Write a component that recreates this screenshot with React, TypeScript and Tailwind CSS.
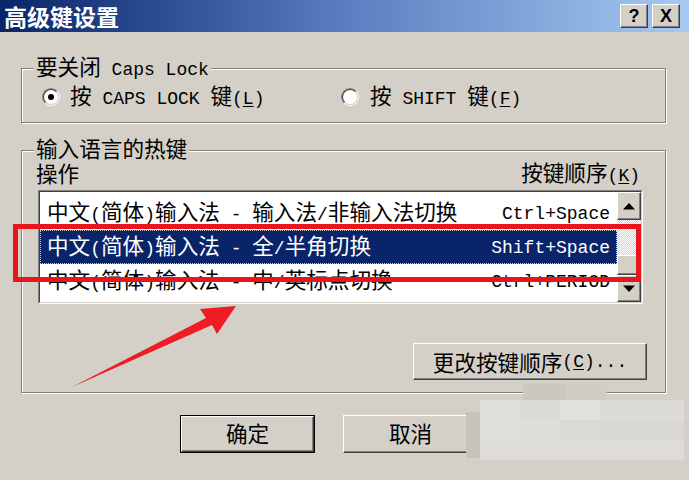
import React from 'react';

const cjk = "font-['Noto_Sans_CJK_SC',sans-serif] text-[21.6px]";
const lat = "font-['Liberation_Mono',monospace] text-[18px]";
const raised =
  'bg-[#d4d0c8] border border-t-white border-l-white border-b-[#404040] border-r-[#404040] shadow-[inset_-1px_-1px_0_#808080]';
const etched = 'border border-[#808080] shadow-[inset_1px_1px_0_#fff,1px_1px_0_#fff]';

const Mix = ({ s }: { s: string }) => (
  <>
    {(s.match(/[\u3000-\u9fff]+|[^\u3000-\u9fff]+/g) || []).map((p, i) =>
      /[\u3000-\u9fff]/.test(p[0]) ? (
        <span key={i} className={cjk}>
          {p}
        </span>
      ) : (
        <span key={i} className={lat}>
          {p}
        </span>
      )
    )}
  </>
);

const U = ({ c }: { c: string }) => <span className={`${lat} underline underline-offset-2`}>{c}</span>;

const Radio = ({ on }: { on?: boolean }) => (
  <span className="w-[18px] h-[18px] shrink-0 rounded-full border border-t-[#808080] border-l-[#808080] border-b-white border-r-white flex">
    <span className="flex-1 rounded-full border border-t-[#404040] border-l-[#404040] border-b-[#d4d0c8] border-r-[#d4d0c8] bg-white flex items-center justify-center">
      {on && <span className="w-[6px] h-[6px] rounded-full bg-black" />}
    </span>
  </span>
);

const rows = [
  { l: '中文(简体)输入法 - 输入法/非输入法切换', r: 'Ctrl+Space' },
  { l: '中文(简体)输入法 - 全/半角切换', r: 'Shift+Space', sel: true },
  { l: '中文(简体)输入法 - 中/英标点切换', r: 'Ctrl+PERIOD' },
];

// mosaic watermark blocks
const mosaic: [number, number, number, number, string][] = [
  [523, 383, 42, 17, '#cbc8c2'],
  [565, 383, 42, 17, '#d0cdc7'],
  [466, 412, 14, 46, '#c6c3bd'],
  [480, 400, 40, 40, '#e1dfdb'],
  [520, 400, 40, 20, '#dcdad5'],
  [560, 400, 40, 20, '#e2e0dc'],
  [600, 400, 84, 20, '#dddbd6'],
  [520, 420, 40, 20, '#dfddd9'],
  [560, 420, 40, 20, '#dbd9d4'],
  [600, 420, 84, 20, '#d9d7d2'],
  [480, 440, 204, 20, '#dedcd8'],
];

export default function App() {
  return (
    <div className="relative w-[689px] h-[480px] overflow-hidden bg-[#d4d0c8] text-black">
      {/* title bar */}
      <div className="h-[32px] flex items-center justify-between pl-[4px] pr-[9px] bg-linear-to-r from-[#0a246a] via-[#5a7ec0] to-[#a6caf0]">
        <span className="font-['Noto_Sans_CJK_SC',sans-serif] text-[23px] font-bold text-white leading-[28px]">高级键设置</span>
        <div className="flex gap-[4px]">
          {['?', 'X'].map((c) => (
            <div key={c} className={`${raised} w-[28px] h-[24px] flex items-center justify-center font-['Liberation_Sans',sans-serif] font-bold text-[18px] leading-none`}>
              {c}
            </div>
          ))}
        </div>
      </div>

      <div className="pl-[21px] pr-[23px]">
        {/* group 1 */}
        <div className={`relative mt-[36px] ${etched} pt-[17px] pb-[14px] pl-[20px]`}>
          <span className="absolute left-[12px] -top-[13px] px-[2px] bg-[#d4d0c8] leading-[20px] whitespace-pre">
            <Mix s="要关闭 Caps Lock" />
          </span>
          <div className="flex items-center h-[22px] leading-[22px] whitespace-pre">
            <div className="w-[299px] flex items-center gap-[10px]">
              <Radio on />
              <span>
                <Mix s="按 CAPS LOCK 键(" />
                <U c="L" />
                <Mix s=")" />
              </span>
            </div>
            <div className="flex items-center gap-[11px]">
              <Radio />
              <span>
                <Mix s="按 SHIFT 键(" />
                <U c="F" />
                <Mix s=")" />
              </span>
            </div>
          </div>
        </div>

        {/* group 2 */}
        <div className={`relative mt-[27px] ${etched} pt-[12px] pb-[12px] pl-[16px] pr-[22px]`}>
          <span className="absolute left-[12px] -top-[13px] px-[2px] bg-[#d4d0c8] leading-[20px] whitespace-pre">
            <Mix s="输入语言的热键" />
          </span>
          <div className="flex justify-between items-center h-[22px] leading-[22px] -ml-[2px] pr-[3px] whitespace-pre">
            <span>
              <Mix s="操作" />
            </span>
            <span>
              <Mix s="按键顺序(" />
              <U c="K" />
              <Mix s=")" />
            </span>
          </div>

          <div className="mt-[5px] h-[114px] border border-t-[#808080] border-l-[#808080] border-b-white border-r-white">
            <div className="h-full flex border border-t-[#404040] border-l-[#404040] border-b-[#d4d0c8] border-r-[#d4d0c8] bg-white">
              <div className="flex-1 overflow-hidden pt-[4px]">
                {rows.map((r) => (
                  <div
                    key={r.l}
                    className={`h-[34px] flex items-center justify-between pl-[6px] pr-[6px] leading-[24px] whitespace-pre border ${
                      r.sel ? 'bg-[#0a246a] text-white border-dotted border-[#c8c8c8]' : 'border-transparent'
                    }`}
                  >
                    <span>
                      <Mix s={r.l} />
                    </span>
                    <span>
                      <Mix s={r.r} />
                    </span>
                  </div>
                ))}
              </div>
              <div className="w-[24px] flex flex-col">
                <div className={`${raised} h-[28px] flex items-center justify-center`}>
                  <svg width="12" height="7" viewBox="0 0 12 7">
                    <path d="M6 0L12 6.5H0Z" fill="#000" />
                  </svg>
                </div>
                <div className="flex-1 flex flex-col justify-end bg-[repeating-conic-gradient(#ffffff_0%_25%,#d4d0c8_0%_50%)] bg-[length:2px_2px]">
                  <div className={`${raised} h-[20px]`} />
                </div>
                <div className={`${raised} h-[27px] flex items-center justify-center`}>
                  <svg width="12" height="7" viewBox="0 0 12 7">
                    <path d="M0 0.5H12L6 7Z" fill="#000" />
                  </svg>
                </div>
              </div>
            </div>
          </div>

          <div className="flex justify-end -mr-[4px] mt-[39px]">
            <button className={`${raised} w-[234px] h-[37px] flex items-center justify-center leading-[22px] whitespace-pre`}>
              <Mix s="更改按键顺序(" />
              <U c="C" />
              <Mix s=")..." />
            </button>
          </div>
        </div>

        {/* dialog buttons */}
        <div className="mt-[22px] flex gap-[28px] pl-[159px]">
          <div className="w-[135px] h-[38px] border border-black flex">
            <button className={`${raised} flex-1 flex items-center justify-center leading-[22px] pb-[2px]`}>
              <Mix s="确定" />
            </button>
          </div>
          <button className={`${raised} w-[135px] h-[38px] flex items-center justify-center leading-[22px] pb-[2px]`}>
            <Mix s="取消" />
          </button>
        </div>
      </div>

      {/* annotation overlays */}
      <div className="absolute left-[13px] top-[224px] w-[628px] h-[58px] border-[5px] border-[#e8151d]" />
      <svg className="absolute left-0 top-0 pointer-events-none" width="689" height="480">
        <polygon points="72,387 206,318 200,309 236,306 217,334 212,325" fill="#ee1c24" />
      </svg>
      {mosaic.map(([x, y, w, h, c], i) => (
        <div key={i} className="absolute" style={{ left: x, top: y, width: w, height: h, background: c }} />
      ))}
    </div>
  );
}
